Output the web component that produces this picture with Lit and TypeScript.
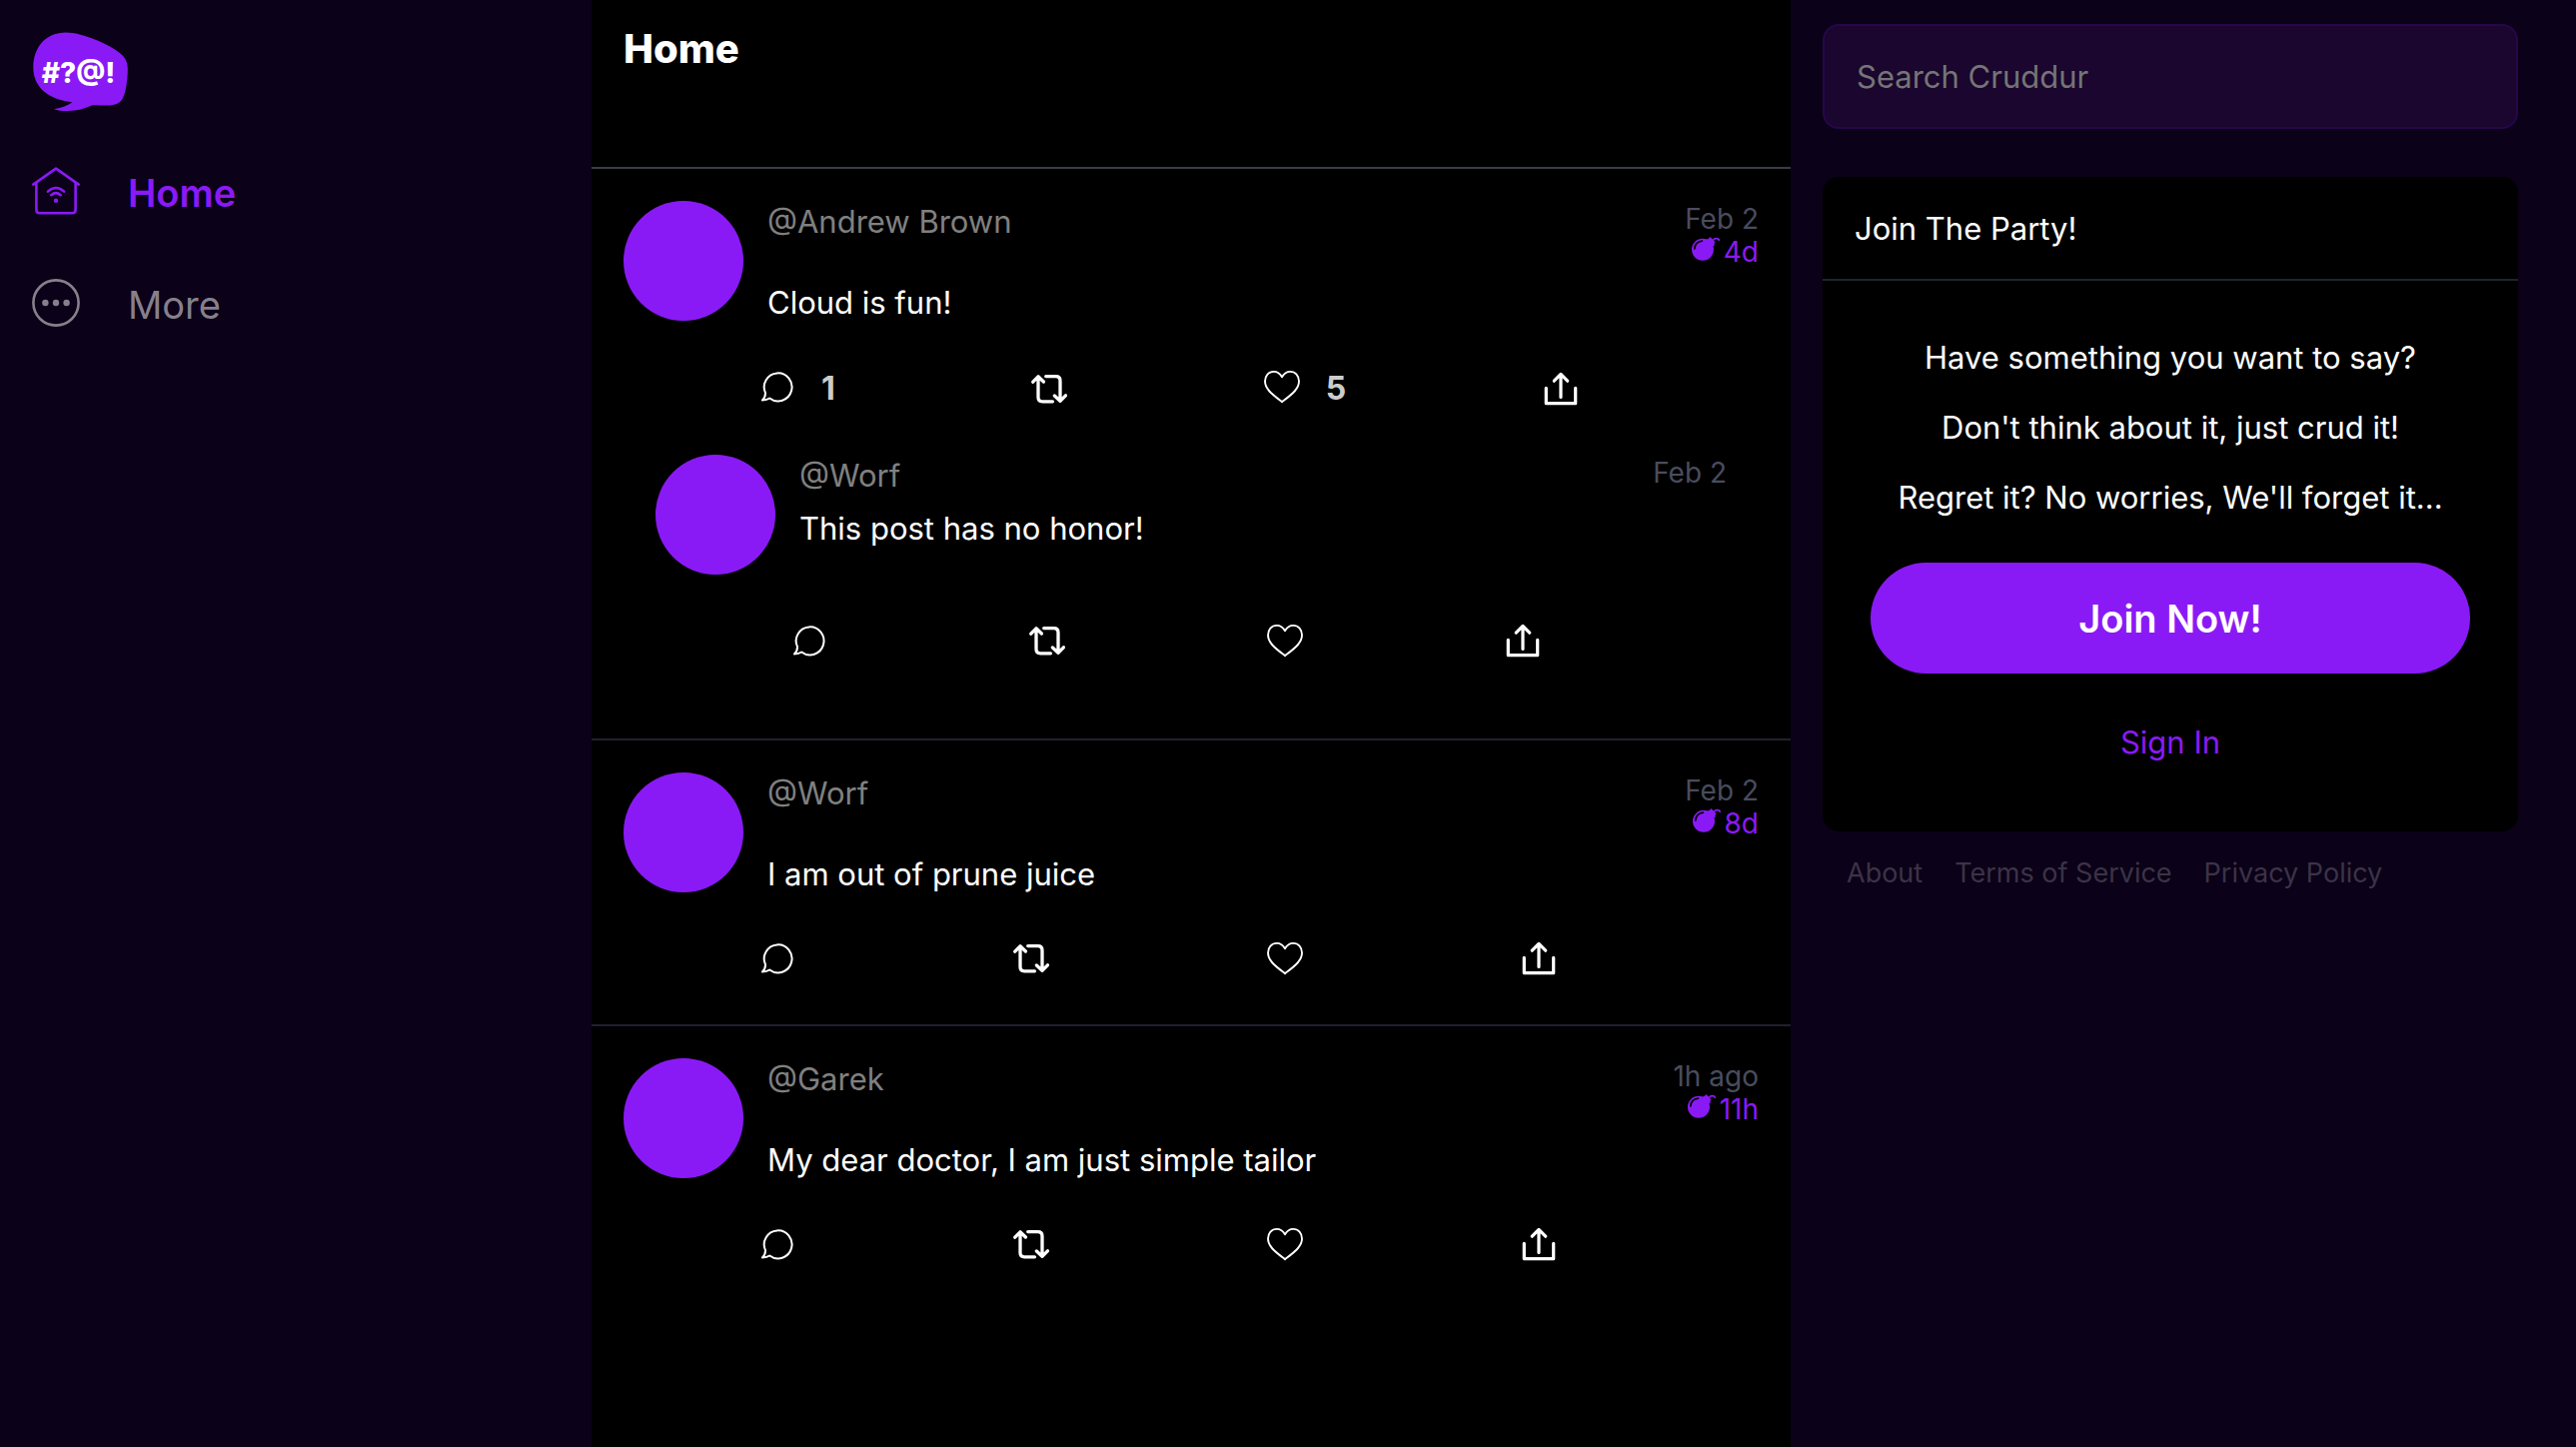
import { LitElement, html, css, svg, nothing } from "lit";
import { customElement, property } from "lit/decorators.js";

interface Activity {
  handle: string;
  message: string;
  created: string;
  expires?: string;
  replies?: number;
  likes?: number;
  children?: Activity[];
}

const activities: Activity[] = [
  {
    handle: "Andrew Brown",
    message: "Cloud is fun!",
    created: "Feb 2",
    expires: "4d",
    replies: 1,
    likes: 5,
    children: [{ handle: "Worf", message: "This post has no honor!", created: "Feb 2" }],
  },
  { handle: "Worf", message: "I am out of prune juice", created: "Feb 2", expires: "8d" },
  { handle: "Garek", message: "My dear doctor, I am just simple tailor", created: "1h ago", expires: "11h" },
];

const base = css`
  :host {
    display: block;
    --purple: #8a1af5;
    --bg: #0b0118;
    font-family: Inter, "Open Sans", "Liberation Sans", sans-serif;
    font-size: 31px;
    line-height: 40px;
  }
  * {
    box-sizing: border-box;
  }
  svg {
    display: block;
    flex: none;
  }
  a {
    text-decoration: none;
  }
  button {
    font: inherit;
    border: 0;
    background: none;
    color: inherit;
    cursor: pointer;
  }
`;

const icons = {
  reply: svg`<path d="M6 24.2 A13.9 14 0 1 1 10.2 29.500 Q7.700 31.400 2.900 31.400 Q6.100 28.600 6 24.200 Z" stroke-width="2"/>`,
  repost: svg`<path d="M7 6 V26.5 Q7 30.8 11.3 30.8 H21.5 M1.8 11.2 L7 5.8 L12.4 11 M14.7 5.6 H24.7 Q29 5.6 29 9.9 V30 M23.4 25 L29 30.3 L34.4 24.8" stroke-width="3.3"/>`,
  like: svg`<path d="M18 8.2 C15.3 3.6 12.6 2.9 9.8 2.9 C4.6 2.9 1 7 1 12.6 C1 20.5 8.5 25.8 18 33.2 C27.5 25.8 35 20.5 35 12.6 C35 7 31.4 2.9 26.2 2.9 C23.4 2.9 20.7 3.6 18 8.2 Z" stroke-width="1.9"/>`,
  share: svg`<path d="M3.3 17.3 V32.7 H32.7 V17.3 M18 26.5 V4 M11.3 10.2 L18 3.4 L24.7 10.2" stroke-width="3.2"/>`,
};

@customElement("cruddur-activity")
export class CruddurActivity extends LitElement {
  @property({ attribute: false }) activity!: Activity;
  @property({ type: Boolean, reflect: true }) reply = false;

  static styles = [
    base,
    css`
      .item {
        padding: 32px;
      }
      :host([reply]) .item {
        padding-top: 30px;
      }
      .top {
        display: flex;
        gap: 24px;
        min-height: 122px;
      }
      .avatar {
        flex: none;
        width: 120px;
        height: 120px;
        border-radius: 50%;
        background: var(--purple);
      }
      .content {
        flex: 1;
        min-width: 0;
      }
      .meta {
        display: flex;
        justify-content: space-between;
        margin-bottom: 12px;
      }
      .handle {
        line-height: 42px;
        color: #808080;
      }
      .dates {
        padding: 2px 0;
        font-size: 28px;
        line-height: 33px;
        color: #494c5e;
      }
      .created {
        text-align: right;
      }
      .expires {
        display: flex;
        align-items: center;
        justify-content: flex-end;
        gap: 4px;
        color: var(--purple);
      }
      .message {
        margin: 0;
        color: #fff;
      }
      .actions {
        display: flex;
        align-items: center;
        margin: 30px 0 0 120px;
      }
      .action {
        display: flex;
        flex: 1 0 auto;
        align-items: flex-start;
        gap: 26px;
        padding: 16px;
        color: #fff;
      }
      .count {
        font-size: 32px;
        font-weight: 700;
        color: #ccc;
      }
    `,
  ];

  private action(kind: keyof typeof icons, label: string, count?: number) {
    return html`<button class="action" aria-label=${label}>
      <svg width="36" height="36" viewBox="0 0 36 36" fill="none" stroke="currentColor" stroke-linecap="round" stroke-linejoin="round">${icons[kind]}</svg>
      ${count ? html`<span class="count">${count}</span>` : nothing}
    </button>`;
  }

  render() {
    const a = this.activity;
    return html`<article class="item">
      <div class="top">
        <div class="avatar"></div>
        <div class="content">
          <div class="meta">
            <div class="handle">@${a.handle}</div>
            <div class="dates">
              <div class="created">${a.created}</div>
              ${a.expires
                ? html`<div class="expires">
                    <svg width="28" height="32" viewBox="0 0 28 32" fill="none">
                      <circle cx="11" cy="12.7" r="11" fill="currentColor" />
                      <path d="M14.5 3 L17.5 1.2 L18.6 0 L20 1.6 L23.6 5.6 L22.4 7 L23 8.6 L20 10 Z" fill="currentColor" />
                      <path d="M21.500 3.400 Q22.800 1.300 25 1.700 Q26.600 1.800 27.300 3.200" stroke="currentColor" stroke-width="1.8" stroke-linecap="round" />
                      <path d="M2.900 12 Q3.200 5.200 10.400 4.200" stroke="#000" stroke-width="1.7" stroke-linecap="round" />
                    </svg>
                    <span>${a.expires}</span>
                  </div>`
                : nothing}
            </div>
          </div>
          <p class="message">${a.message}</p>
        </div>
      </div>
      <div class="actions">
        ${this.action("reply", "Reply", a.replies)} ${this.action("repost", "Repost")}
        ${this.action("like", "Like", a.likes)} ${this.action("share", "Share")}
      </div>
      ${a.children?.map((c) => html`<cruddur-activity reply .activity=${c}></cruddur-activity>`)}
    </article>`;
  }
}

@customElement("app-root")
export class AppRoot extends LitElement {
  static styles = [
    base,
    css`
      .page {
        display: grid;
        grid-template-columns: minmax(0, 296fr) minmax(0, 600fr) minmax(0, 393fr);
        min-height: 100vh;
        background: var(--bg);
      }
      .side {
        display: flex;
        flex-direction: column;
        padding: 32px;
      }
      .logo {
        margin-bottom: 56px;
      }
      .nav {
        display: flex;
        flex-direction: column;
        gap: 60px;
      }
      .link {
        display: flex;
        align-items: flex-start;
        gap: 48px;
        font-size: 38px;
        line-height: 52px;
        color: #86808c;
      }
      .link.active {
        color: var(--purple);
        font-weight: 600;
      }
      .feed {
        background: #000;
      }
      .heading {
        margin: 0;
        padding: 25px 32px 94px;
        border-bottom: 2px solid #393c49;
        font-size: 40px;
        line-height: 48px;
        font-weight: 800;
        color: #fff;
      }
      .post + .post {
        border-top: 2px solid #1f2130;
      }
      .aside {
        padding: 24px 58px 24px 32px;
        line-height: 38px;
      }
      .search {
        display: block;
        width: 100%;
        margin-bottom: 48px;
        padding: 32px;
        border: 2px solid #26074a;
        border-radius: 16px;
        outline: none;
        background: #1a062e;
        color: #fff;
        font: inherit;
        line-height: 37px;
      }
      .search::placeholder {
        color: #757575;
        opacity: 1;
      }
      .card {
        border-radius: 16px;
        background: #000;
        color: #fff;
      }
      .title {
        margin: 0;
        padding: 33px 32px 31px;
        border-bottom: 2px solid #1f2430;
        font-size: 31px;
        font-weight: 400;
      }
      .body {
        display: flex;
        flex-direction: column;
        padding: 58px 48px 70px;
        text-align: center;
      }
      .line {
        margin: 0 0 32px;
      }
      .join {
        margin: 14px 0 50px;
        padding: 33px 32px 31px;
        border-radius: 56px;
        background: var(--purple);
        color: #fff;
        font-size: 38px;
        line-height: 47px;
        font-weight: 600;
      }
      .signin {
        color: var(--purple);
      }
      .footer {
        display: flex;
        gap: 32px;
        padding: 25px 24px;
        font-size: 27px;
        line-height: 34px;
      }
      .footer a {
        color: #3b3347;
      }
      .glyphs {
        font: 800 28px Inter, sans-serif;
      }
    `,
  ];

  render() {
    return html`<div class="page">
      <nav class="side">
        <svg class="logo" width="96" height="79" viewBox="0 0 96 79" role="img" aria-label="Cruddur">
          <path fill="#8a1af5" d="M1.3 36 C1.3 15 14 0.6 34 0.6 C50 0.6 77 12 89 22 C95 27.500 96 32 95.800 39 C95.500 49 94 60 91 66 C88 71.500 84 73.500 75 73.500 C69 73.500 65 73 60.500 73.200 C53 76.500 45 79 36 79 C30 79 25 78.500 22 77.200 C30 76 36 73.500 40.500 70.200 C32 69.500 20 66.500 12 59.500 C5 53.500 1.300 45 1.300 36 Z" />
          <text class="glyphs" x="46.500" y="50.500" text-anchor="middle" fill="#fff">#?@!</text>
        </svg>
        <div class="nav">
          <a class="link active" href="#home">
            <svg width="48" height="48" viewBox="0 0 48 48" fill="none" stroke="currentColor" stroke-width="2.6" stroke-linecap="round" stroke-linejoin="round">
              <path d="M1.3 17.600 L24 1.600 L46.700 17.600 M4.400 16 V43 Q4.400 46.300 7.700 46.300 H40.300 Q43.600 46.300 43.600 43 V16" />
              <path d="M15.900 24.600 Q24 17.400 32.100 24.600 M19.300 28.200 Q24 24.200 28.700 28.200" />
              <circle cx="24" cy="33.800" r="2.200" fill="currentColor" stroke="none" />
            </svg>
            <span>Home</span>
          </a>
          <a class="link" href="#more">
            <svg width="48" height="48" viewBox="0 0 48 48" fill="none">
              <circle cx="24" cy="24" r="22.600" stroke="currentColor" stroke-width="2.600" />
              <g fill="currentColor">
                <circle cx="13.400" cy="24" r="3.200" />
                <circle cx="24" cy="24" r="3.200" />
                <circle cx="34.600" cy="24" r="3.200" />
              </g>
            </svg>
            <span>More</span>
          </a>
        </div>
      </nav>
      <main class="feed">
        <h1 class="heading">Home</h1>
        ${activities.map((a) => html`<cruddur-activity class="post" .activity=${a}></cruddur-activity>`)}
      </main>
      <aside class="aside">
        <input class="search" type="text" placeholder="Search Cruddur" aria-label="Search Cruddur" />
        <section class="card">
          <h2 class="title">Join The Party!</h2>
          <div class="body">
            <p class="line">Have something you want to say?</p>
            <p class="line">Don't think about it, just crud it!</p>
            <p class="line">Regret it? No worries, We'll forget it...</p>
            <button class="join">Join Now!</button>
            <a class="signin" href="#signin">Sign In</a>
          </div>
        </section>
        <footer class="footer">
          <a href="#about">About</a>
          <a href="#terms">Terms of Service</a>
          <a href="#privacy">Privacy Policy</a>
        </footer>
      </aside>
    </div>`;
  }
}
